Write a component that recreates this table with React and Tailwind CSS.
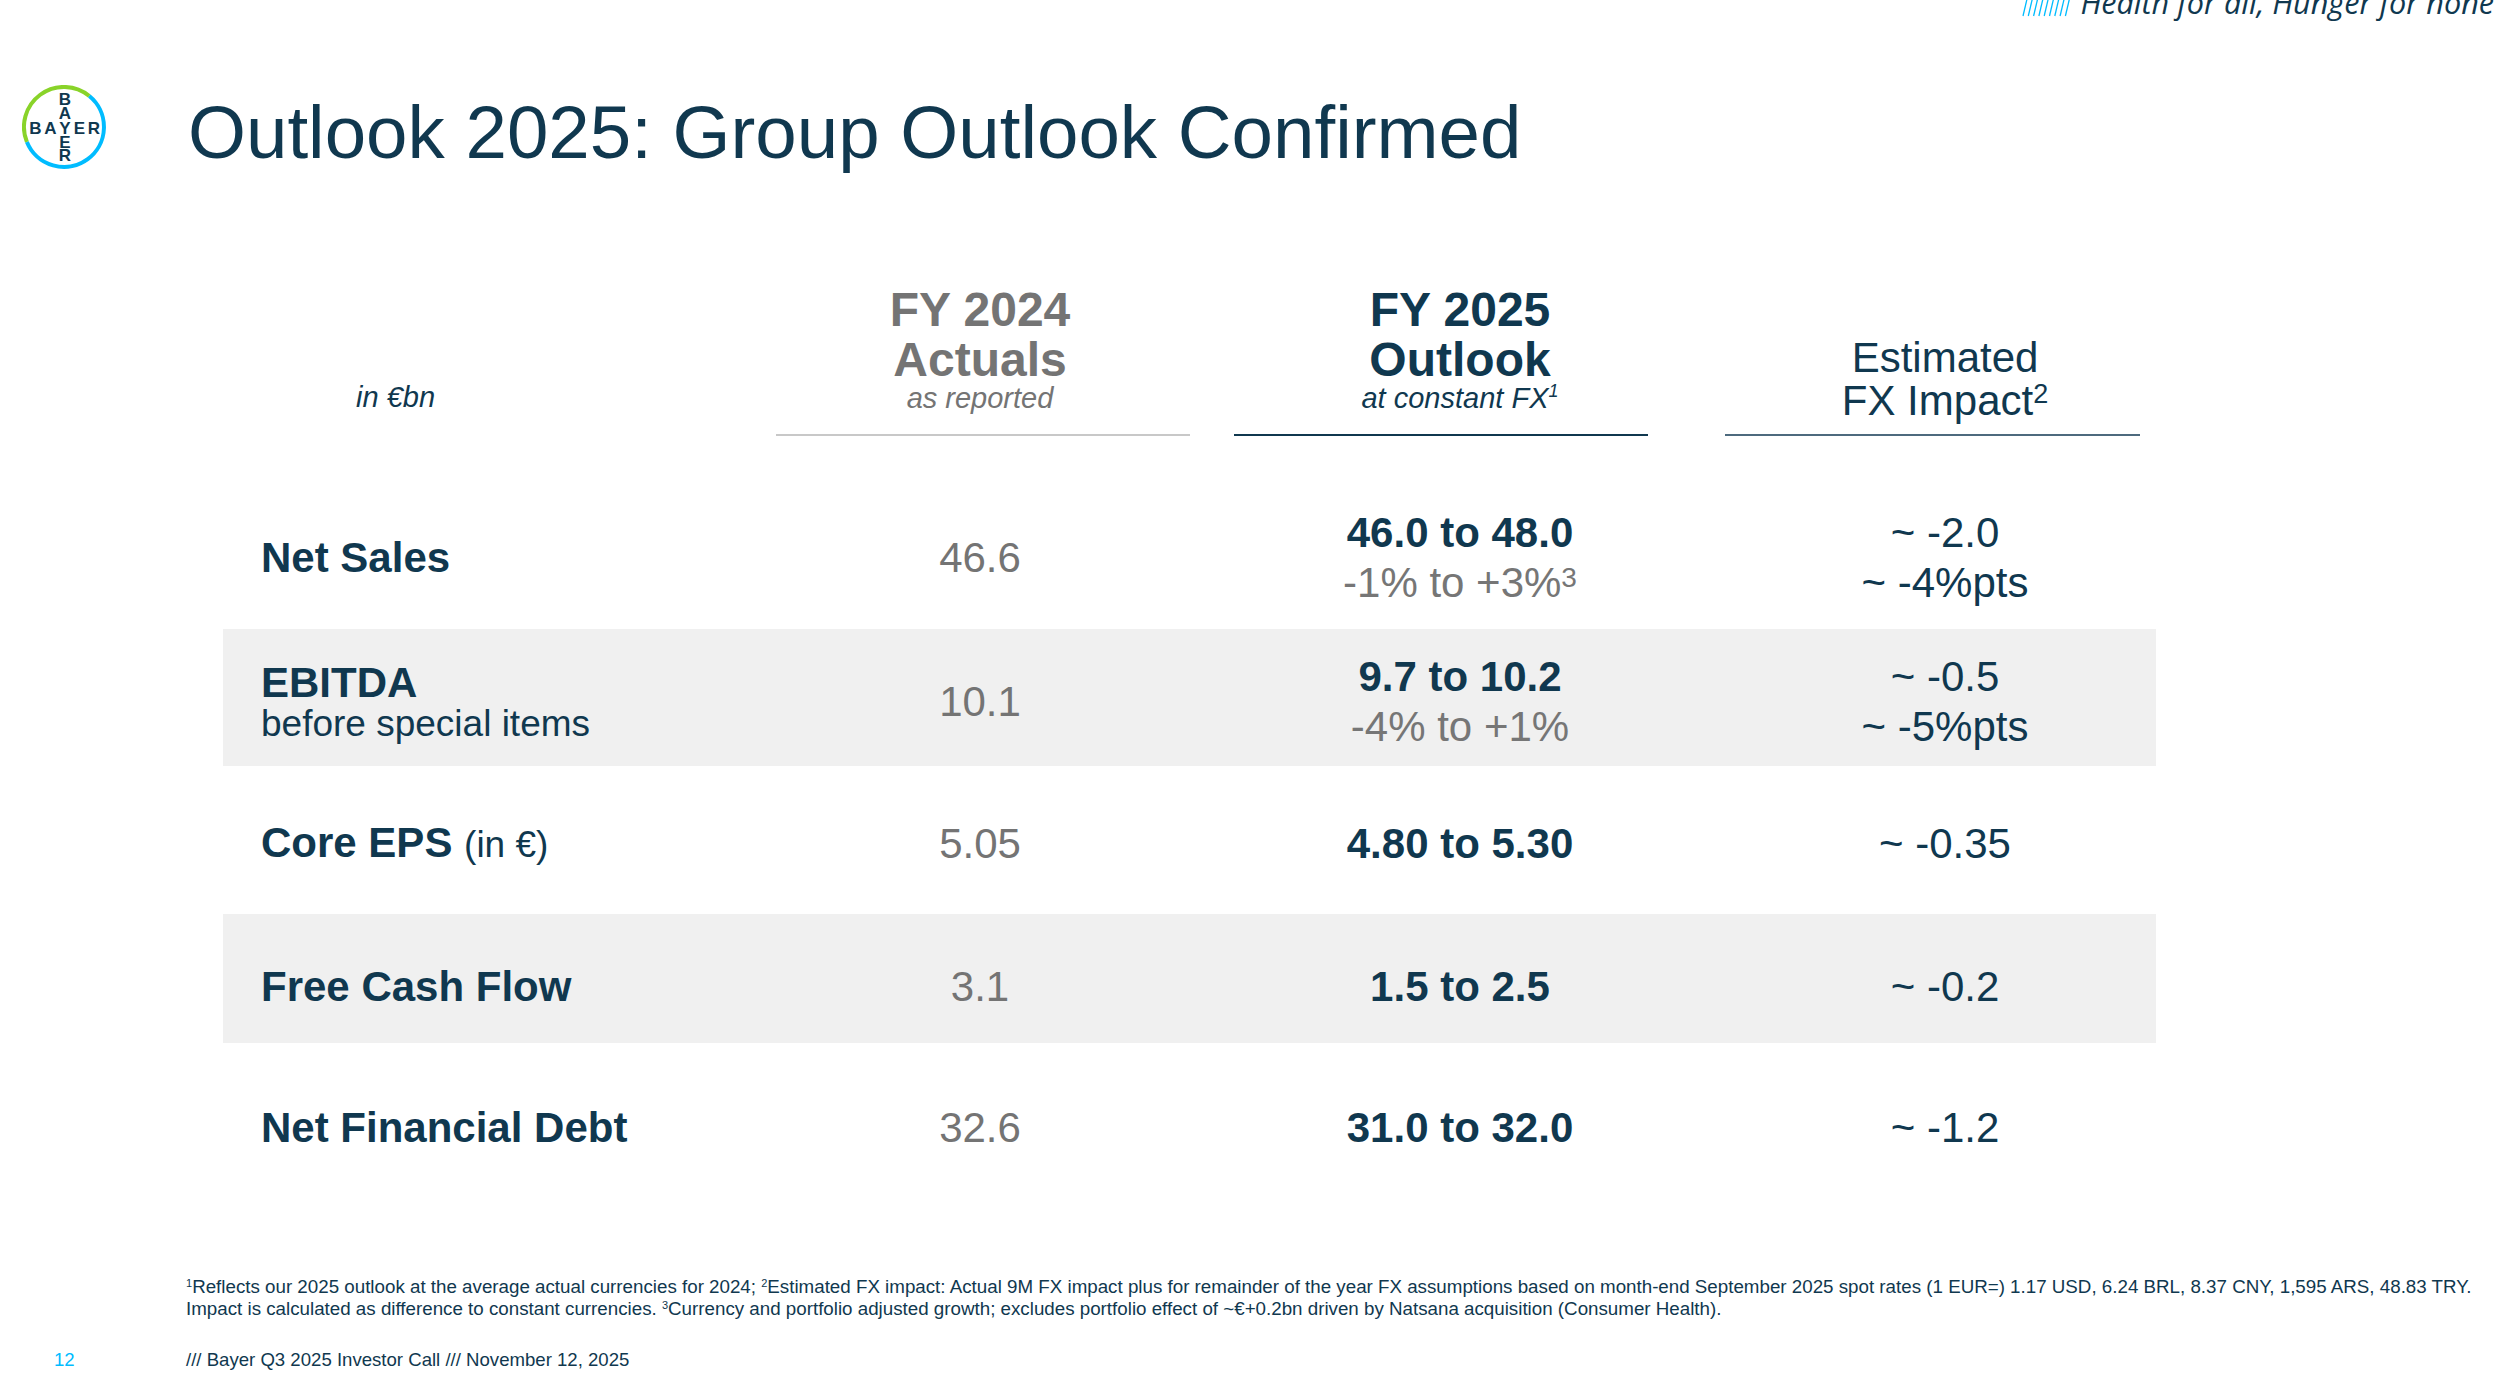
import React from 'react';

function BayerLogo() {
  return (
    <svg width="84" height="84" viewBox="0 0 84 84" className="shrink-0">
      <path d="M67.3 11 A40 40 0 0 0 4.9 57" fill="none" stroke="#89d329" strokeWidth="4" />
      <path d="M67.3 11 A40 40 0 1 1 4.9 57" fill="none" stroke="#00bcff" strokeWidth="4" />
      <g fill="#10384f" fontFamily="Liberation Sans, Arial, sans-serif" fontSize="17" fontWeight="700" textAnchor="middle">
        <text x="43" y="20">B</text>
        <text x="43" y="34">A</text>
        <text x="13.5" y="48.5">B</text>
        <text x="28.5" y="48.5">A</text>
        <text x="43" y="48.5">Y</text>
        <text x="57.5" y="48.5">E</text>
        <text x="72" y="48.5">R</text>
        <text x="43" y="62.5">E</text>
        <text x="43" y="76">R</text>
      </g>
    </svg>
  );
}

function Stripes() {
  const xs = [0, 5.3, 10.6, 15.9, 21.2, 26.5, 31.8, 37.1, 42.4];
  return (
    <svg width="50" height="18" viewBox="0 0 50 18" className="mb-[-2px]">
      {xs.map((x) => (
        <line key={x} x1={x + 5} y1="0" x2={x + 1} y2="17" stroke="#00bcff" strokeWidth="1.3" />
      ))}
    </svg>
  );
}

const ROWS = [
  {
    key: 'sales',
    label: <span className="font-bold">Net Sales</span>,
    v24: '46.6',
    out: '46.0 to 48.0',
    outSub: (
      <>
        -1% to +3%<sup className="text-[28px] -top-[10px]">3</sup>
      </>
    ),
    fx: '~ -2.0',
    fxSub: '~ -4%pts',
    cls: 'h-[142px]',
  },
  {
    key: 'ebitda',
    label: (
      <div className="flex flex-col">
        <span className="font-bold leading-[44px]">EBITDA</span>
        <span className="text-[37px] leading-[38px]">before special items</span>
      </div>
    ),
    v24: '10.1',
    out: '9.7 to 10.2',
    outSub: '-4% to +1%',
    fx: '~ -0.5',
    fxSub: '~ -5%pts',
    cls: 'h-[137px] pt-[8px] bg-[#f0f0f0]',
  },
  {
    key: 'eps',
    label: (
      <span>
        <span className="font-bold">Core EPS</span> <span className="text-[37px]">(in €)</span>
      </span>
    ),
    v24: '5.05',
    out: '4.80 to 5.30',
    fx: '~ -0.35',
    cls: 'h-[148px] pt-[8px]',
  },
  {
    key: 'fcf',
    label: <span className="font-bold">Free Cash Flow</span>,
    v24: '3.1',
    out: '1.5 to 2.5',
    fx: '~ -0.2',
    cls: 'h-[129px] pt-[16px] bg-[#f0f0f0]',
  },
  {
    key: 'nfd',
    label: <span className="font-bold">Net Financial Debt</span>,
    v24: '32.6',
    out: '31.0 to 32.0',
    fx: '~ -1.2',
    cls: 'h-[170px]',
  },
];

function Row({ row }) {
  return (
    <div className={`grid grid-cols-[537px_440px_520px_436px] items-center w-[1933px] ${row.cls}`}>
      <div className="pl-[38px] text-[42px] leading-[50px] text-[#10384f]">{row.label}</div>
      <div className="text-center text-[42px] leading-[50px] text-[#747474]">{row.v24}</div>
      <div className="flex flex-col items-center text-[42px] leading-[50px]">
        <span className="font-bold text-[#10384f]">{row.out}</span>
        {row.outSub && <span className="text-[#767676]">{row.outSub}</span>}
      </div>
      <div className="flex flex-col items-center pl-[14px] text-[42px] leading-[50px] text-[#10384f]">
        <span>{row.fx}</span>
        {row.fxSub && <span>{row.fxSub}</span>}
      </div>
    </div>
  );
}

export default function App() {
  return (
    <div className="w-[2512px] h-[1382px] overflow-hidden bg-white font-['Liberation_Sans',Arial,sans-serif] text-[#10384f]">
      {/* tagline */}
      <div className="h-[16px] flex justify-end pr-[18px]">
        <div className="flex items-end gap-[8px] -mt-[11px] h-[26px]">
          <Stripes />
          <span className="font-['Open_Sans',sans-serif] italic text-[30.6px] leading-[26px] whitespace-nowrap">
            Health for all, Hunger for none
          </span>
        </div>
      </div>

      {/* title row */}
      <div className="flex items-start mt-[69px] pl-[22px]">
        <BayerLogo />
        <h1 className="ml-[82px] mt-[11px] text-[74.5px] leading-[74px] font-normal whitespace-nowrap">
          Outlook 2025: Group Outlook Confirmed
        </h1>
      </div>

      {/* table */}
      <div className="ml-[223px] mt-[110px]">
        <div className="grid grid-cols-[537px_440px_520px_436px] items-end h-[156px]">
          <div className="pl-[133px] mb-[26px] italic text-[29px] leading-[26px]">in €bn</div>
          <div className="flex flex-col items-center text-[#747474]">
            <span className="font-bold text-[48px] leading-[50px]">FY 2024</span>
            <span className="font-bold text-[48px] leading-[50px]">Actuals</span>
            <span className="italic text-[29px] leading-[26px]">as reported</span>
            <div className="mt-[23px] h-[2px] w-[414px] bg-[#c8c8c8] self-start ml-[16px]" />
          </div>
          <div className="flex flex-col items-center">
            <span className="font-bold text-[48px] leading-[50px]">FY 2025</span>
            <span className="font-bold text-[48px] leading-[50px]">Outlook</span>
            <span className="italic text-[29px] leading-[26px]">
              at constant FX<sup className="text-[18px] -top-[11px]">1</sup>
            </span>
            <div className="mt-[23px] h-[2px] w-[414px] bg-[#10384f] self-start ml-[34px]" />
          </div>
          <div className="flex flex-col items-center">
            <span className="pl-[14px] text-[42px] leading-[43px]">Estimated</span>
            <span className="pl-[14px] text-[42px] leading-[43px]">
              FX Impact<sup className="text-[27px] -top-[12px]">2</sup>
            </span>
            <div className="mt-[12px] h-[2px] w-[415px] bg-[#4d6a7e] self-start ml-[5px]" />
          </div>
        </div>

        <div className="mt-[51px]">
          {ROWS.map((r) => (
            <Row key={r.key} row={r} />
          ))}
        </div>
      </div>

      {/* footnotes */}
      <div className="ml-[186px] mt-[63px] text-[18.75px] leading-[22px] whitespace-nowrap">
        <p>
          <sup className="text-[11px] -top-[6px]">1</sup>Reflects our 2025 outlook at the average actual currencies for 2024;{' '}
          <sup className="text-[11px] -top-[6px]">2</sup>Estimated FX impact: Actual 9M FX impact plus for remainder of the year FX
          assumptions based on month-end September 2025 spot rates (1 EUR=) 1.17 USD, 6.24 BRL, 8.37 CNY, 1,595 ARS, 48.83 TRY.
        </p>
        <p>
          Impact is calculated as difference to constant currencies.{' '}
          <sup className="text-[11px] -top-[6px]">3</sup>Currency and portfolio adjusted growth; excludes portfolio effect of
          ~€+0.2bn driven by Natsana acquisition (Consumer Health).
        </p>
      </div>

      {/* footer */}
      <div className="flex mt-[29px] text-[18.6px] leading-[22px]">
        <span className="w-[186px] pl-[54px] text-[#00bcff]">12</span>
        <span>/// Bayer Q3 2025 Investor Call /// November 12, 2025</span>
      </div>
    </div>
  );
}
